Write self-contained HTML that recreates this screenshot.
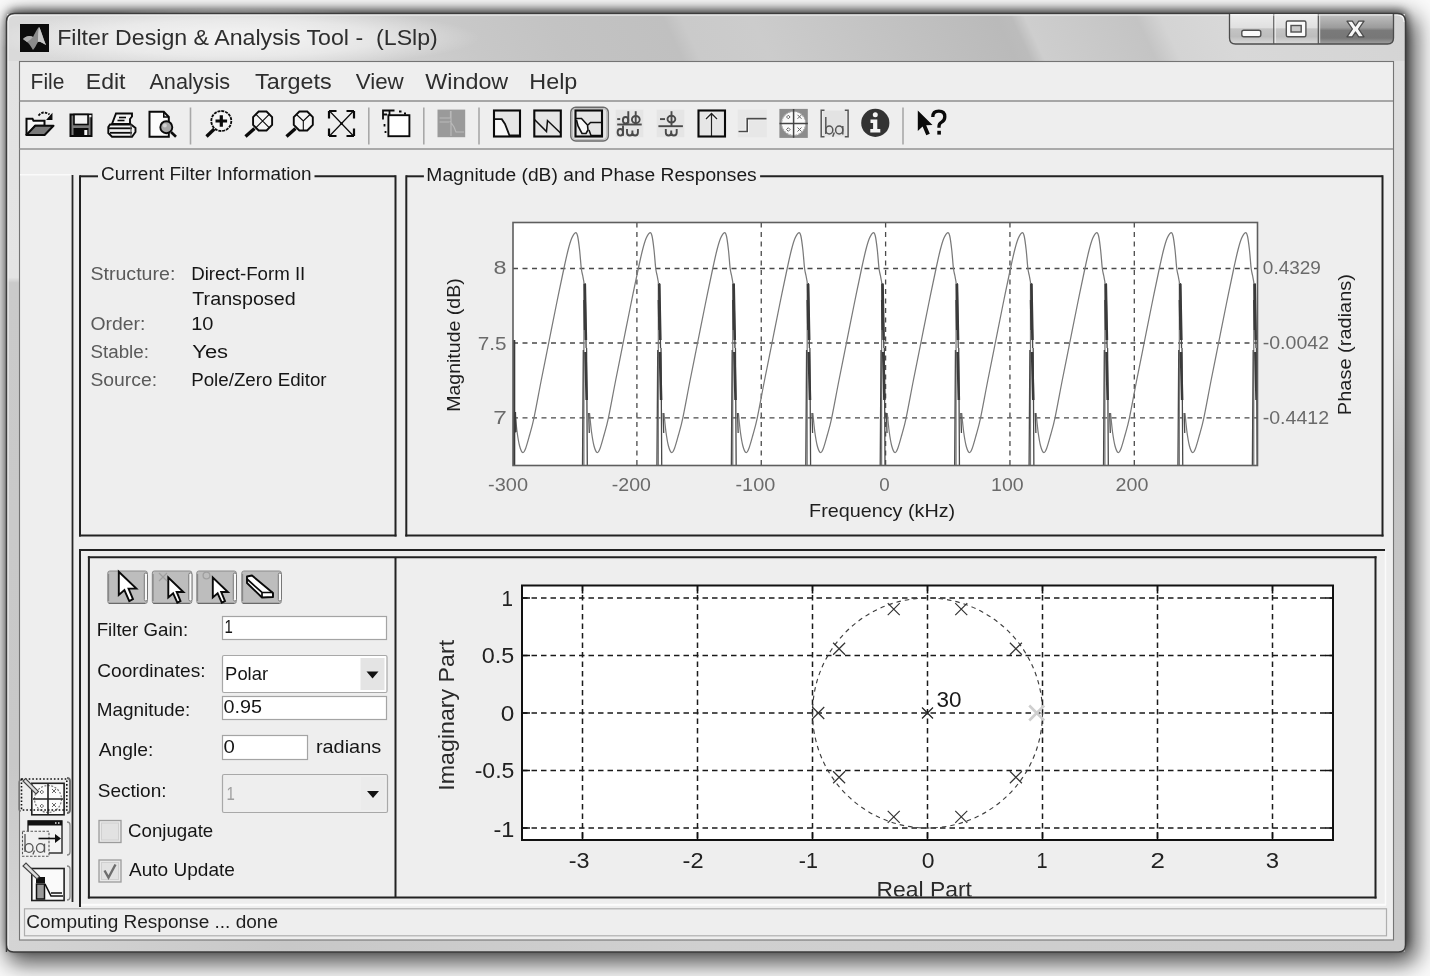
<!DOCTYPE html>
<html><head><meta charset="utf-8"><title>Filter Design &amp; Analysis Tool</title>
<style>
html,body{margin:0;padding:0;}
body{width:1430px;height:976px;overflow:hidden;position:relative;background:#fafafa;filter:grayscale(1);font-family:"Liberation Sans", sans-serif;}
.shadow{position:absolute;left:6px;top:13px;width:1400px;height:939px;border-radius:8px 8px 7px 7px;
  box-shadow: 1px -3px 9px 0px rgba(0,0,0,0.6), 6px 7px 22px 5px rgba(0,0,0,0.66);}
svg.ov{position:absolute;left:0;top:0;}
</style></head><body>
<div class="shadow"></div>
<svg class="ov" width="1430" height="976" viewBox="0 0 1430 976" font-family='"Liberation Sans", sans-serif'>
<defs>
<clipPath id="clipmag"><rect x="513" y="222.5" width="744.5" height="243"/></clipPath>
<clipPath id="clippz"><rect x="400" y="860" width="975" height="36.5"/></clipPath>
</defs>

<defs>
<linearGradient id="tbg" gradientUnits="userSpaceOnUse" x1="0" y1="0" x2="1430" y2="0" gradientTransform="skewX(25)"><stop offset="0.0000" stop-color="#dadada"/><stop offset="0.1979" stop-color="#d6d6d6"/><stop offset="0.3168" stop-color="#c8c8c8"/><stop offset="0.3797" stop-color="#c3c3c3"/><stop offset="0.4580" stop-color="#c0c0c0"/><stop offset="0.4706" stop-color="#cacaca"/><stop offset="0.5196" stop-color="#cccccc"/><stop offset="0.6909" stop-color="#bababa"/><stop offset="0.7014" stop-color="#bcbcbc"/><stop offset="0.7112" stop-color="#cecece"/><stop offset="0.7888" stop-color="#c4c4c4"/><stop offset="0.8063" stop-color="#d4d4d4"/><stop offset="0.8483" stop-color="#d8d8d8"/><stop offset="0.9881" stop-color="#d4d4d4"/></linearGradient>
<radialGradient id="glow" cx="0.5" cy="0.5" r="0.5"><stop offset="0" stop-color="#ffffff" stop-opacity="0.75"/><stop offset="0.6" stop-color="#ffffff" stop-opacity="0.45"/><stop offset="1" stop-color="#ffffff" stop-opacity="0"/></radialGradient>
<linearGradient id="lstrip" x1="0" y1="0" x2="0" y2="1"><stop offset="0" stop-color="#e2e2e2"/><stop offset="0.246" stop-color="#e4e4e4"/><stop offset="0.252" stop-color="#cacaca"/><stop offset="0.8" stop-color="#c8c8c8"/><stop offset="1" stop-color="#d6d6d6"/></linearGradient>
<linearGradient id="rstrip" x1="0" y1="0" x2="0" y2="1"><stop offset="0" stop-color="#dedede"/><stop offset="0.3" stop-color="#d8d8d8"/><stop offset="0.45" stop-color="#c4c4c4"/><stop offset="1" stop-color="#c8c8c8"/></linearGradient>
<linearGradient id="bstrip" x1="0" y1="0" x2="1" y2="0"><stop offset="0" stop-color="#d4d4d4"/><stop offset="0.2" stop-color="#c8c8c8"/><stop offset="0.5" stop-color="#d0d0d0"/><stop offset="1" stop-color="#cccccc"/></linearGradient>
</defs>
<path d="M6.5,952 L6.5,21.5 Q6.5,13.5 14.5,13.5 L1397.5,13.5 Q1405.5,13.5 1405.5,21.5 L1405.5,945 Q1405.5,952 1398.5,952 L13.5,952 Q6.5,952 6.5,945 Z" fill="#cfcfcf"/>
<rect x="7" y="14" width="1398" height="47.5" fill="url(#tbg)"/>
<ellipse cx="235" cy="38" rx="245" ry="30" fill="url(#glow)"/>
<rect x="7" y="61" width="12" height="880" fill="url(#lstrip)"/>
<rect x="1393.5" y="61" width="11.5" height="880" fill="url(#rstrip)"/>
<rect x="7" y="940" width="1398" height="11.5" fill="url(#bstrip)"/>
<path d="M7.8,950.5 L7.8,22 Q7.8,14.8 15,14.8 L1397,14.8 Q1404.2,14.8 1404.2,22" fill="none" stroke="#f6f6f6" stroke-width="1.4" opacity="1"/>
<path d="M6.5,952 L6.5,21.5 Q6.5,13.5 14.5,13.5 L1397.5,13.5 Q1405.5,13.5 1405.5,21.5 L1405.5,945 Q1405.5,952 1398.5,952 L13.5,952 Q6.5,952 6.5,945 Z" fill="none" stroke="#3c3c3c" stroke-width="1.5"/>
<rect x="19.5" y="61.5" width="1374" height="878.5" fill="#eeeeee" stroke="#747474" stroke-width="1.1"/>

<g>
<rect x="20" y="24" width="29" height="28" fill="#0c0c0c"/>
<path d="M23,39 C26,36 30,35 33,37 C35,33 37,29 39,27 C41,30 43,38 46,45 C42,43 40,41 38,42 C36,45 35,48 33,50 C31,47 30,44 27,42 Z" fill="#8a8a8a"/>
<path d="M39,27 C41,30 43,38 46,45 C42,43 40,41 38,42 C38,36 38,31 39,27 Z" fill="#c8c8c8"/>
<path d="M23,39 C26,36 30,35 33,37 C31,39 29,41 27,42 Z" fill="#b0b0b0"/>
</g>
<defs>
<linearGradient id="gmin" x1="0" y1="0" x2="0" y2="1">
 <stop offset="0" stop-color="#eeeeee"/><stop offset="0.45" stop-color="#e0e0e0"/><stop offset="0.5" stop-color="#c4c4c4"/><stop offset="0.75" stop-color="#bdbdbd"/><stop offset="1" stop-color="#dadada"/></linearGradient>
<linearGradient id="gclose" x1="0" y1="0" x2="0" y2="1">
 <stop offset="0" stop-color="#c2c2c2"/><stop offset="0.45" stop-color="#9c9c9c"/><stop offset="0.55" stop-color="#7a7a7a"/><stop offset="0.8" stop-color="#777777"/><stop offset="1" stop-color="#a2a2a2"/></linearGradient>
</defs>
<path d="M1229.5,14 L1229.5,38 Q1229.5,44 1235.5,44 L1273.8,44 L1273.8,14 Z" fill="url(#gmin)"/>
<rect x="1273.8" y="14" width="44.5" height="30" fill="url(#gmin)"/>
<path d="M1318.3,14 L1393.5,14 L1393.5,38 Q1393.5,44 1387.5,44 L1318.3,44 Z" fill="url(#gclose)"/>
<path d="M1229.5,14 L1229.5,38 Q1229.5,44 1235.5,44 L1387.5,44 Q1393.5,44 1393.5,38 L1393.5,14" fill="none" stroke="#4c4c4c" stroke-width="1.3"/>
<line x1="1273.8" y1="14" x2="1273.8" y2="44" stroke="#555" stroke-width="1.2"/>
<line x1="1275.2" y1="15" x2="1275.2" y2="43" stroke="#f4f4f4" stroke-width="1"/>
<line x1="1318.3" y1="14" x2="1318.3" y2="44" stroke="#555" stroke-width="1.2"/>
<line x1="1319.7" y1="15" x2="1319.7" y2="43" stroke="#e0e0e0" stroke-width="1"/>
<line x1="1231" y1="15" x2="1392" y2="15" stroke="#f6f6f6" stroke-width="1" opacity="0.8"/>
<rect x="1241.8" y="30.3" width="19" height="6.5" rx="2" fill="#fafafa" stroke="#505050" stroke-width="1.4"/>
<rect x="1286.3" y="21" width="19.6" height="15.8" rx="1.5" fill="#fafafa" stroke="#505050" stroke-width="1.4"/>
<rect x="1291" y="25.5" width="10.2" height="6.5" fill="#c8c8c8" stroke="#505050" stroke-width="1.4"/>
<path d="M1347,21.2 L1352.3,21.2 L1355.5,26 L1358.7,21.2 L1364,21.2 L1358.6,29 L1364,36.8 L1358.7,36.8 L1355.5,32 L1352.3,36.8 L1347,36.8 L1352.4,29 Z" fill="#f6f6f6" stroke="#4a4a4a" stroke-width="1.3" stroke-linejoin="round"/>

<path d="M26.5,118.8 L32.5,118.8 L33.5,120.7 L44.5,120.7 L44.5,125.8 L35.2,125.8 L28.5,134 L26.5,134 Z" fill="#f8f8f8" stroke="#0a0a0a" stroke-width="2"/>
<path d="M35.2,125.8 L53.5,125.8 L44.6,135 L26.3,135 Z" fill="#7a7a7a" stroke="#0a0a0a" stroke-width="2" stroke-linejoin="round"/>
<path d="M38.5,115.6 Q43,110 49.5,114.5" fill="none" stroke="#0a0a0a" stroke-width="1.8" stroke-dasharray="2.5 1.2"/>
<path d="M47.5,119.3 L51.8,119.3 L51.8,114.5 Z" fill="#0a0a0a" stroke="#0a0a0a" stroke-width="1.3"/>
<rect x="69.5" y="113.5" width="23" height="23.5" fill="#0a0a0a"/>
<rect x="71.5" y="115.5" width="19" height="19.5" fill="#7a7a7a"/>
<rect x="74" y="114.5" width="14" height="10" fill="#f2f2f2" stroke="#0a0a0a" stroke-width="1.6"/>
<rect x="73.5" y="128" width="15" height="8.5" fill="#0a0a0a"/>
<rect x="84.3" y="130" width="3" height="5" fill="#f4f4f4"/>
<rect x="89.2" y="115" width="2.2" height="2.2" fill="#eee"/>
<path d="M116,113.5 L132,113.5 L132,116.5 L130,119 L130,124 L114,124 L112,124 Z" fill="#f4f4f4" stroke="#0a0a0a" stroke-width="1.9"/>
<line x1="119" y1="117.5" x2="126" y2="117.5" stroke="#0a0a0a" stroke-width="1.6"/>
<line x1="117.5" y1="120.5" x2="124.5" y2="120.5" stroke="#0a0a0a" stroke-width="1.6"/>
<path d="M110,124.5 L131,124.5 L135.5,128 L135.5,132 L132,136.7 L112,136.7 L108.3,133 L108.3,127 Z" fill="#f2f2f2" stroke="#0a0a0a" stroke-width="1.9"/>
<line x1="109" y1="128.3" x2="132" y2="128.3" stroke="#0a0a0a" stroke-width="1.8"/>
<line x1="110" y1="132.8" x2="132" y2="132.8" stroke="#0a0a0a" stroke-width="1.8"/>
<path d="M131,124.5 L131,136.5" stroke="#555" stroke-width="1.2"/>
<path d="M149.5,111.8 L163.8,111.8 L168.8,117 L168.8,136.7 L149.5,136.7 Z" fill="#fbfbfb" stroke="#0a0a0a" stroke-width="2"/>
<path d="M163.8,111.8 L163.8,117 L168.8,117" fill="none" stroke="#0a0a0a" stroke-width="1.6"/>
<circle cx="166.3" cy="127.2" r="6" fill="#a8a8a8" stroke="#0a0a0a" stroke-width="1.9"/>
<circle cx="164.8" cy="125.5" r="2" fill="#d0d0d0"/>
<line x1="171" y1="132" x2="176" y2="136.8" stroke="#0a0a0a" stroke-width="2.6"/>
<line x1="190.5" y1="107.5" x2="190.5" y2="144.5" stroke="#a8a8a8" stroke-width="1.6"/>
<line x1="368.8" y1="107.5" x2="368.8" y2="144.5" stroke="#a8a8a8" stroke-width="1.6"/>
<line x1="423.8" y1="107.5" x2="423.8" y2="144.5" stroke="#a8a8a8" stroke-width="1.6"/>
<line x1="479.0" y1="107.5" x2="479.0" y2="144.5" stroke="#a8a8a8" stroke-width="1.6"/>
<line x1="903.0" y1="107.5" x2="903.0" y2="144.5" stroke="#a8a8a8" stroke-width="1.6"/>
<circle cx="221.3" cy="121" r="10" fill="#f4f4f4" stroke="#0a0a0a" stroke-width="1.8" stroke-dasharray="3 0.9"/>
<path d="M221.3,115.2 v11.6 M215.5,121 h11.6" stroke="#0a0a0a" stroke-width="3.2"/>
<line x1="206.5" y1="136.5" x2="214.3" y2="129" stroke="#0a0a0a" stroke-width="3.3"/>
<path d="M272.12,124.94 L266.54,130.52 L258.66,130.52 L253.08,124.94 L253.08,117.06 L258.66,111.48 L266.54,111.48 L272.12,117.06 Z" fill="#f4f4f4" stroke="#0a0a0a" stroke-width="1.9"/>
<path d="M256,114.4 L269.2,127.6 M269.2,114.4 L256,127.6" stroke="#0a0a0a" stroke-width="1.1"/>
<line x1="245.5" y1="136.5" x2="254.5" y2="128.5" stroke="#0a0a0a" stroke-width="3.3"/>
<path d="M312.82,124.94 L307.24,130.52 L299.36,130.52 L293.78,124.94 L293.78,117.06 L299.36,111.48 L307.24,111.48 L312.82,117.06 Z" fill="#f4f4f4" stroke="#0a0a0a" stroke-width="1.9"/>
<path d="M296.5,114.5 L303.3,121 L310,114.5 M303.3,121 L303.3,131" fill="none" stroke="#0a0a0a" stroke-width="1.1"/>
<line x1="286.5" y1="136.5" x2="295.5" y2="128.5" stroke="#0a0a0a" stroke-width="3.3"/>
<path d="M330,111.5 L353,135.5 M353,111.5 L330,135.5" stroke="#0a0a0a" stroke-width="1.2"/>
<path d="M329,111 h7.5 M329,111 v7.5 M354,111 h-7.5 M354,111 v7.5 M329,136 h7.5 M329,136 v-7.5 M354,136 h-7.5 M354,136 v-7.5" stroke="#0a0a0a" stroke-width="2.2"/>
<circle cx="341.5" cy="123.5" r="1.3" fill="#0a0a0a"/>
<path d="M383,119.5 L383,110.5 L394.5,110.5 M389.5,110.5 L389.5,115 M383,114.5 L387,114.5" fill="none" stroke="#0a0a0a" stroke-width="1.8"/>
<path d="M399,111.5 h2.5 M404,113.5 h2" stroke="#0a0a0a" stroke-width="1.8"/>
<path d="M384.5,124 v2.5 M385.5,131 v2" stroke="#0a0a0a" stroke-width="1.8"/>
<rect x="388.4" y="115.2" width="21" height="21" fill="#ffffff" stroke="#0a0a0a" stroke-width="1.9"/>
<rect x="437.5" y="109.6" width="27.7" height="27.6" fill="#9a9a9a"/>
<path d="M439.5,118 h11 v-7 M439.5,122 h10 M451,111 v25 M450,121 L454,127 L456,132 h8" fill="none" stroke="#b9b9b9" stroke-width="1.2"/>
<rect x="494" y="110.5" width="26" height="26" fill="#e6e6e6"/><path d="M494,119.2 L501.8,119.2 L509.5,135.5 L494,135.5 Z" fill="#fafafa"/><path d="M494,119.2 L501.8,119.2 L505,124 L509.5,135.5 L520,135.5" fill="none" stroke="#111" stroke-width="1.8"/><rect x="494" y="110.5" width="26" height="26" fill="none" stroke="#0a0a0a" stroke-width="2.1"/>
<rect x="534.3" y="110.5" width="26.5" height="26" fill="#e6e6e6"/><path d="M534.5,119.5 L546.5,131.5 L547.5,120.5 L560.5,133" fill="none" stroke="#111" stroke-width="1.5"/><rect x="534.3" y="110.5" width="26.5" height="26" fill="none" stroke="#0a0a0a" stroke-width="2.1"/>
<rect x="570.8" y="107.2" width="37.5" height="33.8" rx="5" fill="#e4e4e4" stroke="#6a6a6a" stroke-width="1.5"/>
<rect x="572.3" y="108.7" width="34.5" height="30.8" rx="4" fill="none" stroke="#bdbdbd" stroke-width="1.2"/>
<rect x="575.5" y="110.5" width="26.5" height="26" fill="#e6e6e6"/><path d="M576,118.5 L581.5,118.5 L587.5,125 L588,130 L587,133 L583,133.5 L580,128 L576.5,120 Z" fill="#fafafa"/><path d="M576,118.5 L581.5,118.5 L587.5,125 L588,130 L586,133.5 L582,133.5 L578,126 L576.5,120" fill="none" stroke="#111" stroke-width="1.6"/><path d="M588,125 L590.5,122.5 L601.5,122.5 M589,130 L591,135.5 L601.5,135.5" fill="none" stroke="#111" stroke-width="1.5"/><rect x="575.5" y="110.5" width="26.5" height="26" fill="none" stroke="#0a0a0a" stroke-width="2.1"/>
<rect x="615.7" y="109.6" width="27.7" height="27.6" fill="#e5e5e5"/>
<g stroke="#4a4a4a" stroke-width="1.9" fill="none">
<path d="M617.2,119.1 h3"/><ellipse cx="625.6" cy="120.2" rx="2.7" ry="3.2"/><path d="M628.3,111.2 v12.4"/>
<ellipse cx="635.8" cy="119.6" rx="3.9" ry="3.6"/><path d="M635.7,111.2 v12.8"/>
<path d="M617.2,124.5 h24.5"/>
<ellipse cx="620.3" cy="132.3" rx="2.7" ry="3.3"/><path d="M623,125.6 v10.1"/>
<path d="M627,129 v3.5 q0,3 2.8,3 q2.6,0 2.6,-3 v-2 v2 q0,3 2.7,3 q2.8,0 2.8,-3 v-3.5"/>
</g>
<rect x="656.6" y="109.6" width="27.7" height="27.6" fill="#e5e5e5"/>
<g stroke="#4a4a4a" stroke-width="1.9" fill="none">
<path d="M660,119.1 h5"/><ellipse cx="671.4" cy="119.1" rx="3.9" ry="3.4"/><path d="M671.5,111.2 v15"/>
<path d="M658.4,126.2 h24.5"/>
<path d="M665.8,129 v3.5 q0,3 2.8,3 q2.6,0 2.6,-3 v-2 v2 q0,3 2.7,3 q2.8,0 2.8,-3 v-3.5"/>
</g>
<rect x="698.5" y="110.5" width="26.5" height="26" fill="#e6e6e6"/><path d="M711.5,136 V113.5 M706,119 L711.5,113.5 L717,119" fill="none" stroke="#f8f8f8" stroke-width="3.2"/><path d="M711.5,136 V113.5 M706,119 L711.5,113.5 L717,119" fill="none" stroke="#222" stroke-width="1.3"/><rect x="698.5" y="110.5" width="26.5" height="26" fill="none" stroke="#0a0a0a" stroke-width="2.1"/>
<rect x="737.8" y="109.6" width="29" height="27.6" fill="#e7e7e7"/>
<path d="M738.5,131.5 H747.2 V118.6 H766.5" fill="none" stroke="#f8f8f8" stroke-width="3.4"/>
<path d="M738.5,131.5 H747.2 V118.6 H766.5" fill="none" stroke="#4a4a4a" stroke-width="1.6"/>
<rect x="779.4" y="108.9" width="28.4" height="29" fill="#8c8c8c"/>
<circle cx="793.6" cy="123.4" r="12" fill="#fafafa" stroke="#aaa" stroke-width="1.2" stroke-dasharray="2 1"/>
<path d="M779.5,123.4 h28.3 M793.6,109 v28.8" stroke="#444" stroke-width="1.5"/>
<g stroke="#666" stroke-width="1" fill="none"><path d="M786.5,117 l1.8,-1.8 l1.8,1.8 l-1.8,1.8 z M786.5,129.5 l1.8,-1.8 l1.8,1.8 l-1.8,1.8 z"/><path d="M797.5,114.8 l4,4 M801.5,114.8 l-4,4 M797.5,127.5 l4,4 M801.5,127.5 l-4,4"/></g>
<rect x="823" y="110.5" width="23.5" height="26" fill="#e3e3e3"/>
<g stroke="#555" stroke-width="1.5" fill="none">
<path d="M824.5,110.2 h-3.3 v26.5 h3.3 M844.8,110.2 h3.3 v26.5 h-3.3"/>
<path d="M825.8,117 v17"/><ellipse cx="829.3" cy="130" rx="3.5" ry="4"/>
<path d="M834.3,132.5 l-1.6,4.2"/>
<ellipse cx="839.2" cy="130" rx="3.6" ry="4"/><path d="M842.8,126 v8.5"/>
</g>
<circle cx="875.3" cy="122.9" r="14.1" fill="#333333"/>
<circle cx="875.3" cy="114.8" r="2.5" fill="#f4f4f4"/>
<path d="M870.5,119.5 h6.8 v9.6 h3 v3.5 h-10 v-3.5 h2.8 v-6.1 h-2.6 z" fill="#f4f4f4"/>
<path d="M917.8,110.5 L917.8,131 L922.6,126.5 L926.3,135.2 L929.8,133.8 L926.2,125.3 L932.5,125 Z" fill="#0a0a0a"/>
<path d="M932.8,117 q0,-5.8 6,-5.8 q6,0 6,5.6 q0,3.8 -3.5,5.6 q-2.3,1.2 -2.3,4 v1.3" fill="none" stroke="#0a0a0a" stroke-width="3.3"/>
<rect x="937.3" y="130.8" width="3.6" height="3.8" fill="#0a0a0a"/>
<rect x="107.8" y="571" width="39.5" height="32.5" rx="2" fill="#bdbdbd" stroke="#8c8c8c" stroke-width="1"/>
<rect x="144.3" y="573" width="3.2" height="28" rx="1.5" fill="#f8f8f8" stroke="#777" stroke-width="1"/>
<line x1="108.8" y1="603.4" x2="145.3" y2="603.4" stroke="#6a6a6a" stroke-width="1.4"/>
<line x1="108.5" y1="574" x2="108.5" y2="601" stroke="#888" stroke-width="1.3"/>
<rect x="152.3" y="571" width="39.5" height="32.5" rx="2" fill="#bdbdbd" stroke="#8c8c8c" stroke-width="1"/>
<rect x="188.8" y="573" width="3.2" height="28" rx="1.5" fill="#f8f8f8" stroke="#777" stroke-width="1"/>
<line x1="153.3" y1="603.4" x2="189.8" y2="603.4" stroke="#6a6a6a" stroke-width="1.4"/>
<line x1="153.0" y1="574" x2="153.0" y2="601" stroke="#888" stroke-width="1.3"/>
<rect x="196.8" y="571" width="39.5" height="32.5" rx="2" fill="#bdbdbd" stroke="#8c8c8c" stroke-width="1"/>
<rect x="233.3" y="573" width="3.2" height="28" rx="1.5" fill="#f8f8f8" stroke="#777" stroke-width="1"/>
<line x1="197.8" y1="603.4" x2="234.3" y2="603.4" stroke="#6a6a6a" stroke-width="1.4"/>
<line x1="197.5" y1="574" x2="197.5" y2="601" stroke="#888" stroke-width="1.3"/>
<rect x="241.8" y="571" width="39.5" height="32.5" rx="2" fill="#bdbdbd" stroke="#8c8c8c" stroke-width="1"/>
<rect x="278.3" y="573" width="3.2" height="28" rx="1.5" fill="#f8f8f8" stroke="#777" stroke-width="1"/>
<line x1="242.8" y1="603.4" x2="279.3" y2="603.4" stroke="#6a6a6a" stroke-width="1.4"/>
<line x1="242.5" y1="574" x2="242.5" y2="601" stroke="#888" stroke-width="1.3"/>
<path d="M118.8,571.8 L118.8,594.9799999999999 L124.41199999999999,590.0999999999999 L129.292,601.0799999999999 L132.952,599.1279999999999 L128.56,588.636 L136.368,588.636 Z" fill="#ffffff" stroke="#0a0a0a" stroke-width="1.9" stroke-linejoin="miter"/>
<path d="M168.3,577.5 L168.3,597.45 L173.13000000000002,593.25 L177.33,602.7 L180.48000000000002,601.02 L176.70000000000002,591.99 L183.42000000000002,591.99 Z" fill="#ffffff" stroke="#0a0a0a" stroke-width="1.9" stroke-linejoin="miter"/>
<path d="M159,573 l8,8 M167,573 l-8,8" stroke="#a0a0a0" stroke-width="1.2"/>
<path d="M212.8,577.5 L212.8,597.45 L217.63000000000002,593.25 L221.83,602.7 L224.98000000000002,601.02 L221.20000000000002,591.99 L227.92000000000002,591.99 Z" fill="#ffffff" stroke="#0a0a0a" stroke-width="1.9" stroke-linejoin="miter"/>
<circle cx="206.5" cy="575.5" r="3.4" fill="none" stroke="#a0a0a0" stroke-width="1.3"/>
<path d="M247,576.5 L252,575.5 L273,593 L273,597 L262,597.5 L247,583 Z" fill="#ffffff" stroke="#0a0a0a" stroke-width="1.9" stroke-linejoin="round"/><path d="M247,579 L262,592.5 L273,592.5 M262,592.5 L262,597" fill="none" stroke="#0a0a0a" stroke-width="1.7"/>
<g>
<path d="M67,778 q3,0 3,3 v29 q0,3 -3,3" fill="none" stroke="#666" stroke-width="1.8"/>
<path d="M21,780 q-2,0 -2,3 v26 q0,2 2,2" fill="none" stroke="#777" stroke-width="1.3"/>
<rect x="31.8" y="783.3" width="32.3" height="31.5" fill="#fafafa" stroke="#222" stroke-width="1.6"/>
<circle cx="48" cy="799" r="13.5" fill="none" stroke="#777" stroke-width="1.2" stroke-dasharray="2 1.5"/>
<path d="M33,799 h30 M48,784 v30" stroke="#222" stroke-width="1.6"/>
<g stroke="#666" stroke-width="1" fill="none"><path d="M40,792 l1.8,-1.8 l1.8,1.8 l-1.8,1.8 z M40,806 l1.8,-1.8 l1.8,1.8 l-1.8,1.8 z M52,789 l4,4 M56,789 l-4,4 M52,803 l4,4 M56,803 l-4,4"/></g>
<rect x="21.5" y="779" width="45.3" height="31" fill="none" stroke="#111" stroke-width="1.6" stroke-dasharray="1.6 2"/>
<path d="M23,781 L36,794 L38.5,791.5 L25.5,778.5 Z" fill="#dcdcdc" stroke="#444" stroke-width="1.1"/>
</g>
<g>
<path d="M67,822 q3,0 3,3 v27 q0,3 -3,3" fill="none" stroke="#888" stroke-width="1.3"/>
<rect x="28" y="821" width="34" height="32" fill="#f4f4f4" stroke="#333" stroke-width="1.5"/>
<rect x="28" y="820.5" width="34" height="5" fill="#111"/>
<path d="M55,823 h1.5 M58,823 h1.5" stroke="#eee" stroke-width="1.3"/>
<rect x="22.5" y="831.3" width="26.5" height="25" fill="#f0f0f0" stroke="#555" stroke-width="1.1" stroke-dasharray="2.5 1.5"/>
<g stroke="#555" stroke-width="1.3" fill="none">
<path d="M25,834 v18"/><ellipse cx="29" cy="848" rx="4" ry="4.3"/><path d="M34.5,850.5 l-1.6,4"/>
<ellipse cx="40.5" cy="848" rx="4" ry="4.3"/><path d="M44.5,843.7 v8.8"/></g>
<path d="M38.5,838.5 h18" stroke="#111" stroke-width="1.6"/><path d="M55,834 L61,838.5 L55,843 Z" fill="#111"/>
</g>
<g>
<path d="M67,866 q3,0 3,3 v28 q0,3 -3,3" fill="none" stroke="#888" stroke-width="1.3"/>
<rect x="31.8" y="868.5" width="32.3" height="32" fill="#fafafa" stroke="#222" stroke-width="1.6"/>
<rect x="36" y="877" width="9" height="6" fill="#111"/>
<rect x="36.5" y="884" width="8" height="15" fill="#9a9a9a" stroke="#111" stroke-width="1.5"/>
<path d="M45,884 L48,890 L51,896 H63 M51,893 h11" fill="none" stroke="#111" stroke-width="1.6"/>
<path d="M23,866 L37,879 L39.5,876.5 L26,863 Z" fill="#e0e0e0" stroke="#444" stroke-width="1.1"/>
</g>
<text x="57.15" y="44.70" font-size="21.3" fill="#2e2e2e" textLength="380.70" lengthAdjust="spacingAndGlyphs" style="white-space:pre" >Filter Design &amp; Analysis Tool -  (LSlp)</text>
<text x="30.62" y="89.00" font-size="21.3" fill="#2e2e2e" textLength="33.85" lengthAdjust="spacingAndGlyphs" style="white-space:pre" >File</text>
<text x="85.76" y="89.00" font-size="21.3" fill="#2e2e2e" textLength="39.73" lengthAdjust="spacingAndGlyphs" style="white-space:pre" >Edit</text>
<text x="149.40" y="89.00" font-size="21.3" fill="#2e2e2e" textLength="80.73" lengthAdjust="spacingAndGlyphs" style="white-space:pre" >Analysis</text>
<text x="255.03" y="89.00" font-size="21.3" fill="#2e2e2e" textLength="76.57" lengthAdjust="spacingAndGlyphs" style="white-space:pre" >Targets</text>
<text x="355.69" y="89.00" font-size="21.3" fill="#2e2e2e" textLength="48.10" lengthAdjust="spacingAndGlyphs" style="white-space:pre" >View</text>
<text x="425.28" y="89.00" font-size="21.3" fill="#2e2e2e" textLength="82.94" lengthAdjust="spacingAndGlyphs" style="white-space:pre" >Window</text>
<text x="529.33" y="89.00" font-size="21.3" fill="#2e2e2e" textLength="48.04" lengthAdjust="spacingAndGlyphs" style="white-space:pre" >Help</text>
<line x1="19.5" y1="101" x2="1393" y2="101" stroke="#8e8e8e" stroke-width="1.3" />
<line x1="19.5" y1="149" x2="1393" y2="149" stroke="#929292" stroke-width="1.3" />
<line x1="20" y1="174.8" x2="71" y2="174.8" stroke="#fafafa" stroke-width="1.5" />
<line x1="72.5" y1="175" x2="72.5" y2="902" stroke="#262626" stroke-width="1.8" />
<line x1="80" y1="176.3" x2="98" y2="176.3" stroke="#222" stroke-width="2" />
<line x1="314.5" y1="176.3" x2="395.5" y2="176.3" stroke="#222" stroke-width="2" />
<line x1="80" y1="175.3" x2="80" y2="536.6" stroke="#222" stroke-width="2" />
<line x1="395.5" y1="175.3" x2="395.5" y2="536.6" stroke="#222" stroke-width="2" />
<line x1="79" y1="535.6" x2="396.5" y2="535.6" stroke="#222" stroke-width="2" />
<text x="101.05" y="180.20" font-size="17.5" fill="#1a1a1a" textLength="210.48" lengthAdjust="spacingAndGlyphs" style="white-space:pre" >Current Filter Information</text>
<line x1="406.3" y1="176.3" x2="423.9" y2="176.3" stroke="#222" stroke-width="2" />
<line x1="760.0999999999999" y1="176.3" x2="1382.5" y2="176.3" stroke="#222" stroke-width="2" />
<line x1="406.3" y1="175.3" x2="406.3" y2="536.6" stroke="#222" stroke-width="2" />
<line x1="1382.5" y1="175.3" x2="1382.5" y2="536.6" stroke="#222" stroke-width="2" />
<line x1="405.3" y1="535.6" x2="1383.5" y2="535.6" stroke="#222" stroke-width="2" />
<text x="426.36" y="180.60" font-size="17.5" fill="#1a1a1a" textLength="330.36" lengthAdjust="spacingAndGlyphs" style="white-space:pre" >Magnitude (dB) and Phase Responses</text>
<text x="90.42" y="280.20" font-size="18" fill="#5a5a5a" textLength="84.95" lengthAdjust="spacingAndGlyphs" style="white-space:pre" >Structure:</text>
<text x="191.21" y="280.20" font-size="18" fill="#151515" textLength="114.09" lengthAdjust="spacingAndGlyphs" style="white-space:pre" >Direct-Form II</text>
<text x="192.31" y="304.60" font-size="18" fill="#151515" textLength="103.35" lengthAdjust="spacingAndGlyphs" style="white-space:pre" >Transposed</text>
<text x="90.43" y="330.00" font-size="18" fill="#5a5a5a" textLength="54.90" lengthAdjust="spacingAndGlyphs" style="white-space:pre" >Order:</text>
<text x="191.20" y="330.00" font-size="18" fill="#151515" textLength="22.25" lengthAdjust="spacingAndGlyphs" style="white-space:pre" >10</text>
<text x="90.45" y="358.20" font-size="18" fill="#5a5a5a" textLength="58.50" lengthAdjust="spacingAndGlyphs" style="white-space:pre" >Stable:</text>
<text x="192.26" y="358.20" font-size="18" fill="#151515" textLength="35.84" lengthAdjust="spacingAndGlyphs" style="white-space:pre" >Yes</text>
<text x="90.43" y="386.40" font-size="18" fill="#5a5a5a" textLength="66.74" lengthAdjust="spacingAndGlyphs" style="white-space:pre" >Source:</text>
<text x="191.20" y="386.40" font-size="18" fill="#151515" textLength="135.40" lengthAdjust="spacingAndGlyphs" style="white-space:pre" >Pole/Zero Editor</text>
<line x1="79" y1="550" x2="1385" y2="550" stroke="#222" stroke-width="2" />
<line x1="80" y1="549" x2="80" y2="907" stroke="#222" stroke-width="2" />
<line x1="1385.5" y1="551" x2="1385.5" y2="905" stroke="#fbfbfb" stroke-width="1.5" />
<line x1="81" y1="904.8" x2="1386" y2="904.8" stroke="#fcfcfc" stroke-width="2" />
<line x1="88.9" y1="556.2" x2="88.9" y2="898.5" stroke="#222" stroke-width="2" />
<line x1="1375.5" y1="556.2" x2="1375.5" y2="898.5" stroke="#222" stroke-width="2" />
<line x1="87.9" y1="557.2" x2="1376.5" y2="557.2" stroke="#222" stroke-width="2" />
<line x1="87.9" y1="897.5" x2="1376.5" y2="897.5" stroke="#222" stroke-width="2" />
<line x1="395.5" y1="557" x2="395.5" y2="898" stroke="#222" stroke-width="2" />
<rect x="513" y="222.5" width="744.5" height="243.0" fill="#ffffff" stroke="none" stroke-width="1" />
<line x1="513" y1="268.5" x2="1257.5" y2="268.5" stroke="#4a4a4a" stroke-width="1.3" stroke-dasharray="5 4.5"/>
<line x1="513" y1="343.0" x2="1257.5" y2="343.0" stroke="#4a4a4a" stroke-width="1.3" stroke-dasharray="5 4.5"/>
<line x1="513" y1="417.8" x2="1257.5" y2="417.8" stroke="#4a4a4a" stroke-width="1.3" stroke-dasharray="5 4.5"/>
<line x1="636.9" y1="222.5" x2="636.9" y2="465.5" stroke="#4a4a4a" stroke-width="1.3" stroke-dasharray="5 4.5"/>
<line x1="761.25" y1="222.5" x2="761.25" y2="465.5" stroke="#4a4a4a" stroke-width="1.3" stroke-dasharray="5 4.5"/>
<line x1="885.6" y1="222.5" x2="885.6" y2="465.5" stroke="#4a4a4a" stroke-width="1.3" stroke-dasharray="5 4.5"/>
<line x1="1009.95" y1="222.5" x2="1009.95" y2="465.5" stroke="#4a4a4a" stroke-width="1.3" stroke-dasharray="5 4.5"/>
<line x1="1134.3" y1="222.5" x2="1134.3" y2="465.5" stroke="#4a4a4a" stroke-width="1.3" stroke-dasharray="5 4.5"/>
<g clip-path="url(#clipmag)">
<path d="M515.10,413.00 C515.43,416.17 516.35,426.50 517.10,432.00 C517.85,437.50 518.68,442.58 519.60,446.00 C520.52,449.42 521.60,452.08 522.60,452.50 C523.60,452.92 524.43,451.42 525.60,448.50 C526.77,445.58 528.20,440.12 529.60,435.00 C531.00,429.88 532.08,426.80 534.00,417.80 C535.92,408.80 538.65,393.47 541.10,381.00 C543.55,368.53 546.17,355.67 548.70,343.00 C551.23,330.33 553.77,317.42 556.30,305.00 C558.83,292.58 561.93,277.67 563.90,268.50 C565.87,259.33 566.82,255.00 568.10,250.00 C569.38,245.00 570.40,241.37 571.60,238.50 C572.80,235.63 574.30,233.22 575.30,232.80 C576.30,232.38 576.88,233.13 577.60,236.00 C578.32,238.87 578.98,244.58 579.60,250.00 C580.22,255.42 580.77,264.17 581.30,268.50 C581.83,272.83 582.37,273.75 582.80,276.00 C583.23,278.25 583.72,281.00 583.90,282.00 L583.90,465.5M589.53,413.00 C589.86,416.17 590.78,426.50 591.53,432.00 C592.28,437.50 593.11,442.58 594.03,446.00 C594.95,449.42 596.03,452.08 597.03,452.50 C598.03,452.92 598.86,451.42 600.03,448.50 C601.20,445.58 602.63,440.12 604.03,435.00 C605.43,429.88 606.51,426.80 608.43,417.80 C610.35,408.80 613.08,393.47 615.53,381.00 C617.98,368.53 620.60,355.67 623.13,343.00 C625.66,330.33 628.20,317.42 630.73,305.00 C633.26,292.58 636.36,277.67 638.33,268.50 C640.30,259.33 641.25,255.00 642.53,250.00 C643.81,245.00 644.83,241.37 646.03,238.50 C647.23,235.63 648.73,233.22 649.73,232.80 C650.73,232.38 651.31,233.13 652.03,236.00 C652.75,238.87 653.41,244.58 654.03,250.00 C654.65,255.42 655.20,264.17 655.73,268.50 C656.26,272.83 656.80,273.75 657.23,276.00 C657.66,278.25 658.15,281.00 658.33,282.00 L658.33,465.5M663.96,413.00 C664.29,416.17 665.21,426.50 665.96,432.00 C666.71,437.50 667.54,442.58 668.46,446.00 C669.38,449.42 670.46,452.08 671.46,452.50 C672.46,452.92 673.29,451.42 674.46,448.50 C675.63,445.58 677.06,440.12 678.46,435.00 C679.86,429.88 680.94,426.80 682.86,417.80 C684.78,408.80 687.51,393.47 689.96,381.00 C692.41,368.53 695.03,355.67 697.56,343.00 C700.09,330.33 702.63,317.42 705.16,305.00 C707.69,292.58 710.79,277.67 712.76,268.50 C714.73,259.33 715.68,255.00 716.96,250.00 C718.24,245.00 719.26,241.37 720.46,238.50 C721.66,235.63 723.16,233.22 724.16,232.80 C725.16,232.38 725.74,233.13 726.46,236.00 C727.18,238.87 727.84,244.58 728.46,250.00 C729.08,255.42 729.63,264.17 730.16,268.50 C730.69,272.83 731.23,273.75 731.66,276.00 C732.09,278.25 732.58,281.00 732.76,282.00 L732.76,465.5M738.39,413.00 C738.72,416.17 739.64,426.50 740.39,432.00 C741.14,437.50 741.97,442.58 742.89,446.00 C743.81,449.42 744.89,452.08 745.89,452.50 C746.89,452.92 747.72,451.42 748.89,448.50 C750.06,445.58 751.49,440.12 752.89,435.00 C754.29,429.88 755.37,426.80 757.29,417.80 C759.21,408.80 761.94,393.47 764.39,381.00 C766.84,368.53 769.46,355.67 771.99,343.00 C774.52,330.33 777.06,317.42 779.59,305.00 C782.12,292.58 785.22,277.67 787.19,268.50 C789.16,259.33 790.11,255.00 791.39,250.00 C792.67,245.00 793.69,241.37 794.89,238.50 C796.09,235.63 797.59,233.22 798.59,232.80 C799.59,232.38 800.17,233.13 800.89,236.00 C801.61,238.87 802.27,244.58 802.89,250.00 C803.51,255.42 804.06,264.17 804.59,268.50 C805.12,272.83 805.66,273.75 806.09,276.00 C806.52,278.25 807.01,281.00 807.19,282.00 L807.19,465.5M812.82,413.00 C813.15,416.17 814.07,426.50 814.82,432.00 C815.57,437.50 816.40,442.58 817.32,446.00 C818.24,449.42 819.32,452.08 820.32,452.50 C821.32,452.92 822.15,451.42 823.32,448.50 C824.49,445.58 825.92,440.12 827.32,435.00 C828.72,429.88 829.80,426.80 831.72,417.80 C833.64,408.80 836.37,393.47 838.82,381.00 C841.27,368.53 843.89,355.67 846.42,343.00 C848.95,330.33 851.49,317.42 854.02,305.00 C856.55,292.58 859.65,277.67 861.62,268.50 C863.59,259.33 864.54,255.00 865.82,250.00 C867.10,245.00 868.12,241.37 869.32,238.50 C870.52,235.63 872.02,233.22 873.02,232.80 C874.02,232.38 874.60,233.13 875.32,236.00 C876.04,238.87 876.70,244.58 877.32,250.00 C877.94,255.42 878.49,264.17 879.02,268.50 C879.55,272.83 880.09,273.75 880.52,276.00 C880.95,278.25 881.44,281.00 881.62,282.00 L881.62,465.5M887.25,413.00 C887.58,416.17 888.50,426.50 889.25,432.00 C890.00,437.50 890.83,442.58 891.75,446.00 C892.67,449.42 893.75,452.08 894.75,452.50 C895.75,452.92 896.58,451.42 897.75,448.50 C898.92,445.58 900.35,440.12 901.75,435.00 C903.15,429.88 904.23,426.80 906.15,417.80 C908.07,408.80 910.80,393.47 913.25,381.00 C915.70,368.53 918.32,355.67 920.85,343.00 C923.38,330.33 925.92,317.42 928.45,305.00 C930.98,292.58 934.08,277.67 936.05,268.50 C938.02,259.33 938.97,255.00 940.25,250.00 C941.53,245.00 942.55,241.37 943.75,238.50 C944.95,235.63 946.45,233.22 947.45,232.80 C948.45,232.38 949.03,233.13 949.75,236.00 C950.47,238.87 951.13,244.58 951.75,250.00 C952.37,255.42 952.92,264.17 953.45,268.50 C953.98,272.83 954.52,273.75 954.95,276.00 C955.38,278.25 955.87,281.00 956.05,282.00 L956.05,465.5M961.68,413.00 C962.01,416.17 962.93,426.50 963.68,432.00 C964.43,437.50 965.26,442.58 966.18,446.00 C967.10,449.42 968.18,452.08 969.18,452.50 C970.18,452.92 971.01,451.42 972.18,448.50 C973.35,445.58 974.78,440.12 976.18,435.00 C977.58,429.88 978.66,426.80 980.58,417.80 C982.50,408.80 985.23,393.47 987.68,381.00 C990.13,368.53 992.75,355.67 995.28,343.00 C997.81,330.33 1000.35,317.42 1002.88,305.00 C1005.41,292.58 1008.51,277.67 1010.48,268.50 C1012.45,259.33 1013.40,255.00 1014.68,250.00 C1015.96,245.00 1016.98,241.37 1018.18,238.50 C1019.38,235.63 1020.88,233.22 1021.88,232.80 C1022.88,232.38 1023.46,233.13 1024.18,236.00 C1024.90,238.87 1025.56,244.58 1026.18,250.00 C1026.80,255.42 1027.35,264.17 1027.88,268.50 C1028.41,272.83 1028.95,273.75 1029.38,276.00 C1029.81,278.25 1030.30,281.00 1030.48,282.00 L1030.48,465.5M1036.11,413.00 C1036.44,416.17 1037.36,426.50 1038.11,432.00 C1038.86,437.50 1039.69,442.58 1040.61,446.00 C1041.53,449.42 1042.61,452.08 1043.61,452.50 C1044.61,452.92 1045.44,451.42 1046.61,448.50 C1047.78,445.58 1049.21,440.12 1050.61,435.00 C1052.01,429.88 1053.09,426.80 1055.01,417.80 C1056.93,408.80 1059.66,393.47 1062.11,381.00 C1064.56,368.53 1067.18,355.67 1069.71,343.00 C1072.24,330.33 1074.78,317.42 1077.31,305.00 C1079.84,292.58 1082.94,277.67 1084.91,268.50 C1086.88,259.33 1087.83,255.00 1089.11,250.00 C1090.39,245.00 1091.41,241.37 1092.61,238.50 C1093.81,235.63 1095.31,233.22 1096.31,232.80 C1097.31,232.38 1097.89,233.13 1098.61,236.00 C1099.33,238.87 1099.99,244.58 1100.61,250.00 C1101.23,255.42 1101.78,264.17 1102.31,268.50 C1102.84,272.83 1103.38,273.75 1103.81,276.00 C1104.24,278.25 1104.73,281.00 1104.91,282.00 L1104.91,465.5M1110.54,413.00 C1110.87,416.17 1111.79,426.50 1112.54,432.00 C1113.29,437.50 1114.12,442.58 1115.04,446.00 C1115.96,449.42 1117.04,452.08 1118.04,452.50 C1119.04,452.92 1119.87,451.42 1121.04,448.50 C1122.21,445.58 1123.64,440.12 1125.04,435.00 C1126.44,429.88 1127.52,426.80 1129.44,417.80 C1131.36,408.80 1134.09,393.47 1136.54,381.00 C1138.99,368.53 1141.61,355.67 1144.14,343.00 C1146.67,330.33 1149.21,317.42 1151.74,305.00 C1154.27,292.58 1157.37,277.67 1159.34,268.50 C1161.31,259.33 1162.26,255.00 1163.54,250.00 C1164.82,245.00 1165.84,241.37 1167.04,238.50 C1168.24,235.63 1169.74,233.22 1170.74,232.80 C1171.74,232.38 1172.32,233.13 1173.04,236.00 C1173.76,238.87 1174.42,244.58 1175.04,250.00 C1175.66,255.42 1176.21,264.17 1176.74,268.50 C1177.27,272.83 1177.81,273.75 1178.24,276.00 C1178.67,278.25 1179.16,281.00 1179.34,282.00 L1179.34,465.5M1184.97,413.00 C1185.30,416.17 1186.22,426.50 1186.97,432.00 C1187.72,437.50 1188.55,442.58 1189.47,446.00 C1190.39,449.42 1191.47,452.08 1192.47,452.50 C1193.47,452.92 1194.30,451.42 1195.47,448.50 C1196.64,445.58 1198.07,440.12 1199.47,435.00 C1200.87,429.88 1201.95,426.80 1203.87,417.80 C1205.79,408.80 1208.52,393.47 1210.97,381.00 C1213.42,368.53 1216.04,355.67 1218.57,343.00 C1221.10,330.33 1223.64,317.42 1226.17,305.00 C1228.70,292.58 1231.80,277.67 1233.77,268.50 C1235.74,259.33 1236.69,255.00 1237.97,250.00 C1239.25,245.00 1240.27,241.37 1241.47,238.50 C1242.67,235.63 1244.17,233.22 1245.17,232.80 C1246.17,232.38 1246.75,233.13 1247.47,236.00 C1248.19,238.87 1248.85,244.58 1249.47,250.00 C1250.09,255.42 1250.64,264.17 1251.17,268.50 C1251.70,272.83 1252.24,273.75 1252.67,276.00 C1253.10,278.25 1253.59,281.00 1253.77,282.00 L1253.77,465.5" stroke="#7a7a7a" stroke-width="1.25" fill="none" />
<path d=" M510.67,283 L511.67,348 M512.17,348 L512.87,465.5 M508.87,350 L508.07,465.5 M514.27,413 L514.87,433 M585.10,283 L586.10,348 M586.60,348 L587.30,465.5 M583.30,350 L582.50,465.5 M588.70,413 L589.30,433 M659.53,283 L660.53,348 M661.03,348 L661.73,465.5 M657.73,350 L656.93,465.5 M663.13,413 L663.73,433 M733.96,283 L734.96,348 M735.46,348 L736.16,465.5 M732.16,350 L731.36,465.5 M737.56,413 L738.16,433 M808.39,283 L809.39,348 M809.89,348 L810.59,465.5 M806.59,350 L805.79,465.5 M811.99,413 L812.59,433 M882.82,283 L883.82,348 M884.32,348 L885.02,465.5 M881.02,350 L880.22,465.5 M886.42,413 L887.02,433 M957.25,283 L958.25,348 M958.75,348 L959.45,465.5 M955.45,350 L954.65,465.5 M960.85,413 L961.45,433 M1031.68,283 L1032.68,348 M1033.18,348 L1033.88,465.5 M1029.88,350 L1029.08,465.5 M1035.28,413 L1035.88,433 M1106.11,283 L1107.11,348 M1107.61,348 L1108.31,465.5 M1104.31,350 L1103.51,465.5 M1109.71,413 L1110.31,433 M1180.54,283 L1181.54,348 M1182.04,348 L1182.74,465.5 M1178.74,350 L1177.94,465.5 M1184.14,413 L1184.74,433 M1254.97,283 L1255.97,348 M1256.47,348 L1257.17,465.5 M1253.17,350 L1252.37,465.5 M1258.57,413 L1259.17,433" stroke="#4a4a4a" stroke-width="1.3" fill="none" />
<path d=" M510.37,284 L511.47,340 M511.07,352 L512.27,400 M510.07,300 L510.67,330 M584.80,284 L585.90,340 M585.50,352 L586.70,400 M584.50,300 L585.10,330 M659.23,284 L660.33,340 M659.93,352 L661.13,400 M658.93,300 L659.53,330 M733.66,284 L734.76,340 M734.36,352 L735.56,400 M733.36,300 L733.96,330 M808.09,284 L809.19,340 M808.79,352 L809.99,400 M807.79,300 L808.39,330 M882.52,284 L883.62,340 M883.22,352 L884.42,400 M882.22,300 L882.82,330 M956.95,284 L958.05,340 M957.65,352 L958.85,400 M956.65,300 L957.25,330 M1031.38,284 L1032.48,340 M1032.08,352 L1033.28,400 M1031.08,300 L1031.68,330 M1105.81,284 L1106.91,340 M1106.51,352 L1107.71,400 M1105.51,300 L1106.11,330 M1180.24,284 L1181.34,340 M1180.94,352 L1182.14,400 M1179.94,300 L1180.54,330 M1254.67,284 L1255.77,340 M1255.37,352 L1256.57,400 M1254.37,300 L1254.97,330" stroke="#3a3a3a" stroke-width="2.6" fill="none" />
<path d="M514.2,340 L514.2,465.5 M515,412 L515.5,432" stroke="#3a3a3a" stroke-width="2.2" fill="none" />
</g>
<rect x="513" y="222.5" width="744.5" height="243.0" fill="none" stroke="#5e5e5e" stroke-width="1.6" />
<text x="493.57" y="274.40" font-size="18" fill="#6a6a6a" textLength="13.00" lengthAdjust="spacingAndGlyphs" style="white-space:pre" >8</text>
<text x="477.67" y="350.00" font-size="18" fill="#6a6a6a" textLength="28.77" lengthAdjust="spacingAndGlyphs" style="white-space:pre" >7.5</text>
<text x="493.28" y="424.40" font-size="18" fill="#6a6a6a" textLength="13.57" lengthAdjust="spacingAndGlyphs" style="white-space:pre" >7</text>
<text x="1262.84" y="274.40" font-size="18" fill="#6a6a6a" textLength="58.09" lengthAdjust="spacingAndGlyphs" style="white-space:pre" >0.4329</text>
<text x="1262.72" y="349.40" font-size="18" fill="#6a6a6a" textLength="66.29" lengthAdjust="spacingAndGlyphs" style="white-space:pre" >-0.0042</text>
<text x="1262.72" y="424.40" font-size="18" fill="#6a6a6a" textLength="66.29" lengthAdjust="spacingAndGlyphs" style="white-space:pre" >-0.4412</text>
<text x="488.10" y="490.50" font-size="18" fill="#6a6a6a" textLength="39.93" lengthAdjust="spacingAndGlyphs" style="white-space:pre" >-300</text>
<text x="611.82" y="490.50" font-size="18" fill="#6a6a6a" textLength="39.09" lengthAdjust="spacingAndGlyphs" style="white-space:pre" >-200</text>
<text x="735.51" y="490.50" font-size="18" fill="#6a6a6a" textLength="39.72" lengthAdjust="spacingAndGlyphs" style="white-space:pre" >-100</text>
<text x="879.25" y="490.50" font-size="18" fill="#6a6a6a" textLength="10.43" lengthAdjust="spacingAndGlyphs" style="white-space:pre" >0</text>
<text x="991.14" y="490.50" font-size="18" fill="#6a6a6a" textLength="32.51" lengthAdjust="spacingAndGlyphs" style="white-space:pre" >100</text>
<text x="1115.52" y="490.50" font-size="18" fill="#6a6a6a" textLength="32.84" lengthAdjust="spacingAndGlyphs" style="white-space:pre" >200</text>
<text x="809.12" y="516.80" font-size="19" fill="#1e1e1e" textLength="146.08" lengthAdjust="spacingAndGlyphs" style="white-space:pre" >Frequency (kHz)</text>
<text x="460.30" y="411.86" font-size="18.5" fill="#1e1e1e" transform="rotate(-90 460.30 411.86)" textLength="133.57" lengthAdjust="spacingAndGlyphs" style="white-space:pre" >Magnitude (dB)</text>
<text x="1351.30" y="415.20" font-size="18.5" fill="#1e1e1e" transform="rotate(-90 1351.30 415.20)" textLength="141.18" lengthAdjust="spacingAndGlyphs" style="white-space:pre" >Phase (radians)</text>
<rect x="522" y="585.5" width="811" height="254.5" fill="#ffffff" stroke="none" stroke-width="1" />
<line x1="522" y1="598.0" x2="1333" y2="598.0" stroke="#1a1a1a" stroke-width="1.5" stroke-dasharray="5.5 4"/>
<line x1="522" y1="655.5" x2="1333" y2="655.5" stroke="#1a1a1a" stroke-width="1.5" stroke-dasharray="5.5 4"/>
<line x1="522" y1="713.0" x2="1333" y2="713.0" stroke="#1a1a1a" stroke-width="1.5" stroke-dasharray="5.5 4"/>
<line x1="522" y1="770.5" x2="1333" y2="770.5" stroke="#1a1a1a" stroke-width="1.5" stroke-dasharray="5.5 4"/>
<line x1="522" y1="828.0" x2="1333" y2="828.0" stroke="#1a1a1a" stroke-width="1.5" stroke-dasharray="5.5 4"/>
<line x1="582.5" y1="585.5" x2="582.5" y2="840" stroke="#1a1a1a" stroke-width="1.5" stroke-dasharray="5.5 4"/>
<line x1="697.5" y1="585.5" x2="697.5" y2="840" stroke="#1a1a1a" stroke-width="1.5" stroke-dasharray="5.5 4"/>
<line x1="812.5" y1="585.5" x2="812.5" y2="840" stroke="#1a1a1a" stroke-width="1.5" stroke-dasharray="5.5 4"/>
<line x1="927.5" y1="585.5" x2="927.5" y2="840" stroke="#1a1a1a" stroke-width="1.5" stroke-dasharray="5.5 4"/>
<line x1="1042.5" y1="585.5" x2="1042.5" y2="840" stroke="#1a1a1a" stroke-width="1.5" stroke-dasharray="5.5 4"/>
<line x1="1157.5" y1="585.5" x2="1157.5" y2="840" stroke="#1a1a1a" stroke-width="1.5" stroke-dasharray="5.5 4"/>
<line x1="1272.5" y1="585.5" x2="1272.5" y2="840" stroke="#1a1a1a" stroke-width="1.5" stroke-dasharray="5.5 4"/>
<path d=" M522,598.0 h8 M1333,598.0 h-8 M522,655.5 h8 M1333,655.5 h-8 M522,713.0 h8 M1333,713.0 h-8 M522,770.5 h8 M1333,770.5 h-8 M522,828.0 h8 M1333,828.0 h-8 M582.5,840 v-8 M582.5,585.5 v8 M697.5,840 v-8 M697.5,585.5 v8 M812.5,840 v-8 M812.5,585.5 v8 M927.5,840 v-8 M927.5,585.5 v8 M1042.5,840 v-8 M1042.5,585.5 v8 M1157.5,840 v-8 M1157.5,585.5 v8 M1272.5,840 v-8 M1272.5,585.5 v8" stroke="#111" stroke-width="1.6" fill="none" />
<circle cx="927.5" cy="713.0" r="115.0" fill="none" stroke="#3e3e3e" stroke-width="1.15" stroke-dasharray="4.5 4"/>
<path d="M1009.89,642.78 L1021.89,654.78 M1009.89,654.78 L1021.89,642.78" stroke="#333" stroke-width="1.2" fill="none" />
<path d="M955.26,603.10 L967.26,615.10 M955.26,615.10 L967.26,603.10" stroke="#333" stroke-width="1.2" fill="none" />
<path d="M887.74,603.10 L899.74,615.10 M887.74,615.10 L899.74,603.10" stroke="#333" stroke-width="1.2" fill="none" />
<path d="M833.11,642.78 L845.11,654.78 M833.11,654.78 L845.11,642.78" stroke="#333" stroke-width="1.2" fill="none" />
<path d="M812.25,707.00 L824.25,719.00 M812.25,719.00 L824.25,707.00" stroke="#333" stroke-width="1.2" fill="none" />
<path d="M833.11,771.22 L845.11,783.22 M833.11,783.22 L845.11,771.22" stroke="#333" stroke-width="1.2" fill="none" />
<path d="M887.74,810.90 L899.74,822.90 M887.74,822.90 L899.74,810.90" stroke="#333" stroke-width="1.2" fill="none" />
<path d="M955.26,810.90 L967.26,822.90 M955.26,822.90 L967.26,810.90" stroke="#333" stroke-width="1.2" fill="none" />
<path d="M1009.89,771.22 L1021.89,783.22 M1009.89,783.22 L1021.89,771.22" stroke="#333" stroke-width="1.2" fill="none" />
<path d="M1029.25,705.50 L1044.25,720.50 M1029.25,720.50 L1044.25,705.50" stroke="#cfcfcf" stroke-width="2.6" fill="none" />
<path d="M922.00,707.50 L933.00,718.50 M922.00,718.50 L933.00,707.50" stroke="#222" stroke-width="1.2" fill="none" />
<text x="936.51" y="706.70" font-size="22" fill="#1a1a1a" textLength="25.03" lengthAdjust="spacingAndGlyphs" style="white-space:pre" >30</text>
<rect x="522" y="585.5" width="811" height="254.5" fill="none" stroke="#111" stroke-width="2" />
<text x="501.45" y="606.00" font-size="21.5" fill="#222" textLength="11.51" lengthAdjust="spacingAndGlyphs" style="white-space:pre" >1</text>
<text x="481.87" y="662.50" font-size="21.5" fill="#222" textLength="32.47" lengthAdjust="spacingAndGlyphs" style="white-space:pre" >0.5</text>
<text x="500.72" y="721.40" font-size="21.5" fill="#222" textLength="13.56" lengthAdjust="spacingAndGlyphs" style="white-space:pre" >0</text>
<text x="474.66" y="778.00" font-size="21.5" fill="#222" textLength="39.73" lengthAdjust="spacingAndGlyphs" style="white-space:pre" >-0.5</text>
<text x="493.54" y="837.00" font-size="21.5" fill="#222" textLength="20.90" lengthAdjust="spacingAndGlyphs" style="white-space:pre" >-1</text>
<text x="568.75" y="868.00" font-size="21.5" fill="#222" textLength="20.77" lengthAdjust="spacingAndGlyphs" style="white-space:pre" >-3</text>
<text x="682.64" y="868.00" font-size="21.5" fill="#222" textLength="21.03" lengthAdjust="spacingAndGlyphs" style="white-space:pre" >-2</text>
<text x="798.73" y="868.00" font-size="21.5" fill="#222" textLength="19.12" lengthAdjust="spacingAndGlyphs" style="white-space:pre" >-1</text>
<text x="921.68" y="868.00" font-size="21.5" fill="#222" textLength="12.75" lengthAdjust="spacingAndGlyphs" style="white-space:pre" >0</text>
<text x="1036.50" y="868.00" font-size="21.5" fill="#222" textLength="11.12" lengthAdjust="spacingAndGlyphs" style="white-space:pre" >1</text>
<text x="1150.50" y="868.00" font-size="21.5" fill="#222" textLength="14.42" lengthAdjust="spacingAndGlyphs" style="white-space:pre" >2</text>
<text x="1265.86" y="868.00" font-size="21.5" fill="#222" textLength="13.32" lengthAdjust="spacingAndGlyphs" style="white-space:pre" >3</text>
<text x="453.60" y="790.69" font-size="21.5" fill="#2a2a2a" transform="rotate(-90 453.60 790.69)" textLength="150.86" lengthAdjust="spacingAndGlyphs" style="white-space:pre" >Imaginary Part</text>
<g clip-path="url(#clippz)">
<text x="876.47" y="897.20" font-size="21.5" fill="#2a2a2a" textLength="95.43" lengthAdjust="spacingAndGlyphs" style="white-space:pre" >Real Part</text>
</g>
<text x="96.70" y="635.90" font-size="17.8" fill="#151515" textLength="91.48" lengthAdjust="spacingAndGlyphs" style="white-space:pre" >Filter Gain:</text>
<text x="97.25" y="677.00" font-size="17.8" fill="#151515" textLength="108.27" lengthAdjust="spacingAndGlyphs" style="white-space:pre" >Coordinates:</text>
<text x="96.69" y="715.60" font-size="17.8" fill="#151515" textLength="93.57" lengthAdjust="spacingAndGlyphs" style="white-space:pre" >Magnitude:</text>
<text x="98.70" y="755.80" font-size="17.8" fill="#151515" textLength="54.75" lengthAdjust="spacingAndGlyphs" style="white-space:pre" >Angle:</text>
<text x="97.85" y="797.00" font-size="17.8" fill="#151515" textLength="68.63" lengthAdjust="spacingAndGlyphs" style="white-space:pre" >Section:</text>
<text x="315.91" y="752.50" font-size="17.8" fill="#151515" textLength="65.29" lengthAdjust="spacingAndGlyphs" style="white-space:pre" >radians</text>
<text x="128.07" y="837.10" font-size="17.8" fill="#151515" textLength="85.16" lengthAdjust="spacingAndGlyphs" style="white-space:pre" >Conjugate</text>
<text x="129.00" y="876.10" font-size="17.8" fill="#151515" textLength="105.95" lengthAdjust="spacingAndGlyphs" style="white-space:pre" >Auto Update</text>
<rect x="222.5" y="616.5" width="164" height="23" fill="#ffffff" stroke="#a4a4a4" stroke-width="1.2" />
<text x="224.38" y="632.60" font-size="17.8" fill="#151515" textLength="8.31" lengthAdjust="spacingAndGlyphs" style="white-space:pre" >1</text>
<rect x="222.5" y="696.5" width="164" height="23" fill="#ffffff" stroke="#a4a4a4" stroke-width="1.2" />
<text x="223.61" y="712.80" font-size="17.8" fill="#151515" textLength="38.51" lengthAdjust="spacingAndGlyphs" style="white-space:pre" >0.95</text>
<rect x="222.5" y="735.5" width="85" height="24" fill="#ffffff" stroke="#a4a4a4" stroke-width="1.2" />
<text x="223.58" y="752.50" font-size="17.8" fill="#151515" textLength="11.35" lengthAdjust="spacingAndGlyphs" style="white-space:pre" >0</text>
<rect x="222.5" y="655.5" width="164.5" height="37" fill="#ffffff" stroke="#a8a8a8" stroke-width="1.2" rx="1.5"/>
<rect x="360.5" y="658" width="24" height="32" fill="#e4e4e4" stroke="none" stroke-width="1" />
<text x="225.13" y="680.30" font-size="17.8" fill="#151515" textLength="42.94" lengthAdjust="spacingAndGlyphs" style="white-space:pre" >Polar</text>
<path d="M366.5,671.5 L378.5,671.5 L372.5,678.5 Z" stroke="none" stroke-width="0" fill="#111" />
<rect x="222.5" y="774.5" width="165" height="38" fill="#eeeeee" stroke="#a8a8a8" stroke-width="1.2" rx="1.5"/>
<rect x="361" y="777" width="24" height="33" fill="#ebebeb" stroke="none" stroke-width="1" />
<text x="226.58" y="800.20" font-size="17.8" fill="#a0a0a0" textLength="8.31" lengthAdjust="spacingAndGlyphs" style="white-space:pre" >1</text>
<path d="M367,791.0 L379,791.0 L373,798.0 Z" stroke="none" stroke-width="0" fill="#111" />
<rect x="99.0" y="820.5" width="22" height="22" fill="#e9e9e9" stroke="#9c9c9c" stroke-width="1.3" />
<rect x="101.5" y="823" width="17" height="17" fill="#e2e2e2" stroke="#d0d0d0" stroke-width="1" />
<rect x="99.0" y="860.0" width="22" height="22" fill="#e9e9e9" stroke="#9c9c9c" stroke-width="1.3" />
<rect x="101.5" y="862.5" width="17" height="17" fill="#e2e2e2" stroke="#d0d0d0" stroke-width="1" />
<path d="M104.5,870.5 L108.5,877.5 L115.5,864.5" stroke="#6e6e6e" stroke-width="2.4" fill="none" />
<rect x="24.5" y="908.8" width="1362" height="27" fill="none" stroke="#aeaeae" stroke-width="1.2" />
<text x="26.25" y="928.20" font-size="18" fill="#1e1e1e" textLength="251.72" lengthAdjust="spacingAndGlyphs" style="white-space:pre" >Computing Response ... done</text>
</svg>
</body></html>
